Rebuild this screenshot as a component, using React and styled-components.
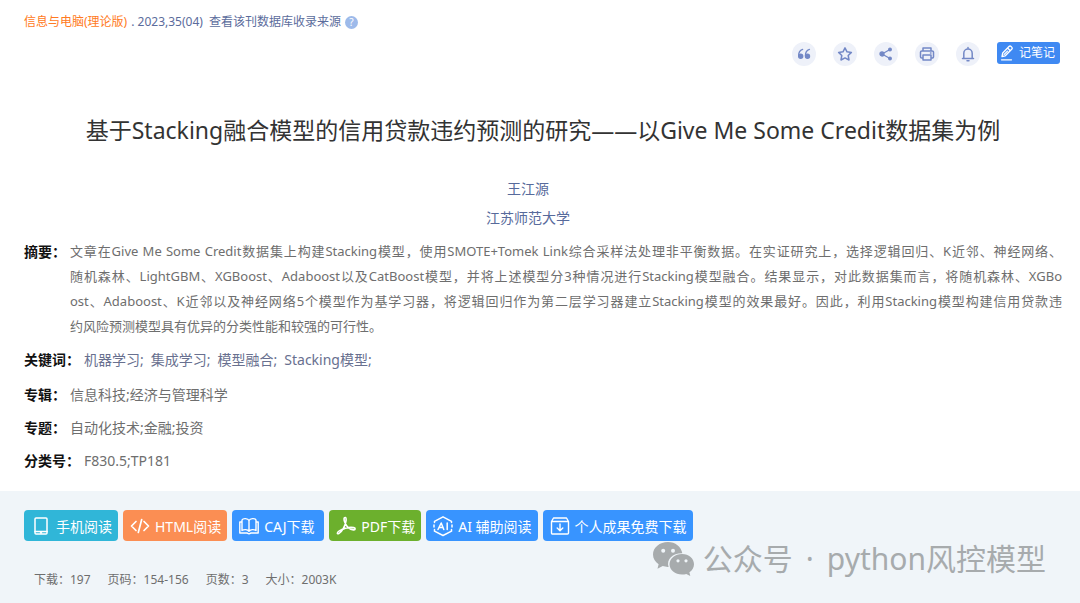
import React from "react";
import styled, { createGlobalStyle } from "styled-components";

const GlobalStyle = createGlobalStyle`
  * { box-sizing: border-box; }
  body {
    margin: 0;
    background: #fff;
    font-family: "Noto Sans", "Noto Sans CJK SC", sans-serif;
    font-size: 14px;
    color: #6e6e6e;
  }
  button { font-family: inherit; border: 0; cursor: pointer; }
  a { text-decoration: none; color: inherit; }
`;

const Page = styled.div`
  display: flex;
  flex-direction: column;
  min-height: 100vh;
`;

const Article = styled.main`
  padding: 13px 18px 10px 24px;
`;

const Source = styled.nav`
  display: flex;
  align-items: center;
  font-size: 12px;
  line-height: 18px;
  color: #5b6c9c;
`;

const Journal = styled.a`
  color: #ff7a22;
`;

const Issue = styled.a`
  margin: 0 6px 0 4px;
`;

const Help = styled.button`
  display: grid;
  place-items: center;
  width: 13px;
  height: 13px;
  margin-left: 4px;
  padding: 0;
  border-radius: 50%;
  background: #9dbaea;
  color: #fff;
  font-size: 10px;
  line-height: 13px;
`;

const Toolbar = styled.div`
  display: flex;
  justify-content: flex-end;
  align-items: center;
  gap: 17px;
  margin: 11px 2px 0 0;
`;

const RoundButton = styled.button`
  display: grid;
  place-items: center;
  width: 24px;
  height: 24px;
  padding: 0;
  border-radius: 50%;
  background: #eef1f9;
  color: #7388c6;
`;

const NoteButton = styled.button`
  display: flex;
  align-items: center;
  gap: 4px;
  height: 22px;
  margin-bottom: 2px;
  padding: 0 5px 0 2px;
  border-radius: 3px;
  background: #3f89f2;
  color: #fff;
  font-size: 12px;
  line-height: 20px;
`;

const Title = styled.h1`
  margin: 47px 0 0;
  font-size: 23px;
  line-height: 34px;
  font-weight: 400;
  text-align: center;
  color: #333;
`;

const Byline = styled.div`
  display: flex;
  flex-direction: column;
  align-items: center;
  gap: 5px;
  margin-top: 30px;
  padding-right: 30px;
  line-height: 24px;
  color: #576a9b;
`;

const Details = styled.dl`
  margin: 9px 0 0;
`;

const Row = styled.div`
  display: flex;
  align-items: flex-start;
  gap: 4px;
  margin-bottom: 8px;
  line-height: 25px;
`;

const Label = styled.dt`
  flex: none;
  font-weight: 700;
  color: #111;
`;

const Value = styled.dd`
  flex: 1;
  margin: 0;
`;

const Abstract = styled(Value)`
  font-size: 13px;
`;

const Line = styled.span`
  display: block;
  text-align: justify;
  text-align-last: ${(p) => (p.$last ? "left" : "justify")};
`;

const Keywords = styled(Value)`
  display: flex;
  gap: 7px;
  margin-bottom: 2px;
  color: #68708f;
`;

const Footer = styled.footer`
  flex: 1;
  padding: 19px 24px 12px;
  background: #f0f5f9;
`;

const Actions = styled.div`
  display: flex;
  flex-wrap: wrap;
  gap: 5px;
`;

const Action = styled.button`
  display: flex;
  align-items: center;
  gap: 4px;
  min-width: 92px;
  height: 31px;
  padding: 0 6px;
  border-radius: 4px;
  background: ${(p) => p.$color};
  color: #fff;
  font-size: 14px;
`;

const Bottom = styled.div`
  display: flex;
  justify-content: space-between;
  align-items: flex-start;
`;

const Stats = styled.ul`
  display: flex;
  gap: 17px;
  margin: 0;
  padding: 30px 10px 0;
  list-style: none;
  font-size: 12px;
  line-height: 18px;
`;

const Watermark = styled.div`
  display: flex;
  align-items: center;
  gap: 8px;
  margin-right: 10px;
  font-size: 30px;
  line-height: 36px;
  color: #a7abad;
`;

const Account = styled.span`
  display: flex;
  gap: 13px;
`;

const Svg = ({ size = 22, box = 22, width = 1.5, children }) => (
  <svg width={size} height={size} viewBox={`0 0 ${box} ${box}`} fill="none" stroke="currentColor"
    strokeWidth={width} strokeLinecap="round" strokeLinejoin="round" aria-hidden="true">
    {children}
  </svg>
);

const QuoteIcon = () => (
  <Svg size={16} box={16} width={1.4}>
    <path d="M6.600 3.400C4 4.300 2.600 6.600 2.700 9.700" />
    <path d="M13.400 3.400C10.800 4.300 9.400 6.600 9.500 9.700" />
    <circle cx="4.700" cy="10.300" r="2" fill="currentColor" />
    <circle cx="11.500" cy="10.300" r="2" fill="currentColor" />
  </Svg>
);
const StarIcon = () => (
  <Svg size={16} box={16} width={1.5}>
    <path d="M8 1.800l2 4 4.400.6-3.200 3.100.8 4.500L8 11.900 4 14l.8-4.500L1.600 6.400 6 5.800z" />
  </Svg>
);
const ShareIcon = () => (
  <Svg size={16} box={16} width={1.3}>
    <path d="M12 3.500L4 8l8 4.500" />
    <circle cx="4" cy="8" r="2" fill="currentColor" />
    <circle cx="12" cy="3.500" r="1.300" fill="currentColor" />
    <circle cx="12" cy="12.500" r="1.300" fill="currentColor" />
  </Svg>
);
const PrintIcon = () => (
  <Svg size={16} box={16} width={1.5}>
    <path d="M4 5V2h8v3M4 12H2.800A1.300 1.300 0 0 1 1.500 10.700V6.300A1.300 1.300 0 0 1 2.800 5h10.400a1.300 1.300 0 0 1 1.300 1.300v4.400a1.300 1.300 0 0 1-1.300 1.300H12M4 9h8v5H4zM11.500 7h.5" />
  </Svg>
);
const BellIcon = () => (
  <Svg size={16} box={16} width={1.5}>
    <path d="M2.500 12.500h11M3.800 12.300V7.200a4.200 4.200 0 0 1 8.400 0v5.100M8 1.500v1M7 14.800h2" />
  </Svg>
);
const PenIcon = () => (
  <Svg size={16} box={16} width={1.3}>
    <path d="M3 11.500l.7-3.500L10 1.500a1.500 1.500 0 0 1 2.100 0l.6.6a1.500 1.500 0 0 1 0 2.100L6.300 10.800zM8.600 3l2.700 2.700M5.200 9.400l3.300-3.300M2.500 14.800h10" />
  </Svg>
);
const PhoneIcon = () => (
  <Svg><rect x="5" y="3" width="12" height="16" rx="1" /><path d="M5 16.500h12M10.500 18h1" /></Svg>
);
const CodeIcon = () => (
  <Svg width={1.7}><path d="M7 6.500L2.500 11 7 15.500M15 6.500l4.500 4.500-4.500 4.500M12.700 4.500l-3.400 13" /></Svg>
);
const BookIcon = () => (
  <Svg width={1.4}>
    <path d="M11 5.500C10 3.300 5 3 4 5v10.500c2-1.400 5.500-1.200 7 .7 1.500-1.900 5-2.100 7-.7V5c-1-2-6-1.700-7 .5zM11 5.500v10.500M4 7H1.800v11H9l2 .8 2-.8h7.200V7H18" />
  </Svg>
);
const PdfIcon = () => (
  <Svg width={1.6}>
    <path d="M10.300 2.500c-1.600-.2-1.500 2.300-.6 4.500 1.500 4 5 7.500 8.800 7.900 2 .2 2.300-1.800.2-2.300-4.200-.8-9.700.7-14.400 3.300-2.800 1.600-2.200 3.500-.5 2.700 3-1.500 6.800-8.100 7.300-13.200.1-1.500.1-2.800-.8-2.900z" />
  </Svg>
);
const AiIcon = () => (
  <Svg width={1.5}>
    <path d="M2.500 7.500V6.400L11 1.800l8.500 4.600v1.100M2.500 14.500v1.700L11 20.500l8.500-4.300v-1.700" />
    <path d="M2 10v2M20 10v2M6 14.500L9.200 8l2.600 6.500M7.200 12.500h3.700M15.200 8v6.500" />
  </Svg>
);
const ArchiveIcon = () => (
  <Svg width={1.4}>
    <path d="M2.500 6.500h17V18a1 1 0 0 1-1 1h-15a1 1 0 0 1-1-1zM2.500 6.500l2-3.500h13l2 3.500M11 9v6.500M8.200 13l2.800 2.700 2.800-2.700" />
  </Svg>
);
const WechatIcon = () => (
  <svg width="42" height="34" viewBox="0 0 42 34" aria-hidden="true">
    <path fill="#a7abad" d="M15 0C6.700 0 0 5.500 0 12.500c0 4 2.200 7.400 5.600 9.700L4.500 26.800l5.200-2.700c1.900.6 3.700.9 5.900.8-2.500-8 4.500-14 13.700-13.700C28.200 4.800 22.300 0 15 0z" />
    <path fill="#a7abad" d="M29 12c-7 0-12.500 4.600-12.500 10.300S22 32.500 29 32.500c1.500 0 3-.2 4.300-.6l4 2-.9-3.600c2.900-1.900 4.600-4.800 4.600-8C41 16.600 36 12 29 12z" />
    <g fill="#f0f5f9"><circle cx="10.200" cy="8.800" r="2" /><circle cx="20" cy="8.800" r="2" /><circle cx="25" cy="18.800" r="1.600" /><circle cx="33" cy="18.800" r="1.600" /></g>
  </svg>
);

const tools = [
  ["引用", QuoteIcon], ["收藏", StarIcon], ["分享", ShareIcon], ["打印", PrintIcon], ["关注", BellIcon],
];
const actions = [
  ["手机阅读", "#30b6d8", PhoneIcon],
  ["HTML阅读", "#fb8e53", CodeIcon],
  ["CAJ下载", "#3894ff", BookIcon],
  ["PDF下载", "#6cb02d", PdfIcon],
  ["AI 辅助阅读", "#3894ff", AiIcon],
  ["个人成果免费下载", "#3894ff", ArchiveIcon],
];
const abstractLines = [
  "文章在Give Me Some Credit数据集上构建Stacking模型，使用SMOTE+Tomek Link综合采样法处理非平衡数据。在实证研究上，选择逻辑回归、K近邻、神经网络、",
  "随机森林、LightGBM、XGBoost、Adaboost以及CatBoost模型，并将上述模型分3种情况进行Stacking模型融合。结果显示，对此数据集而言，将随机森林、XGBo",
  "ost、Adaboost、K近邻以及神经网络5个模型作为基学习器，将逻辑回归作为第二层学习器建立Stacking模型的效果最好。因此，利用Stacking模型构建信用贷款违",
  "约风险预测模型具有优异的分类性能和较强的可行性。",
];
const keywords = ["机器学习;", "集成学习;", "模型融合;", "Stacking模型;"];
const facts = [
  ["专辑：", "信息科技;经济与管理科学"],
  ["专题：", "自动化技术;金融;投资"],
  ["分类号：", "F830.5;TP181"],
];
const stats = ["下载：197", "页码：154-156", "页数：3", "大小：2003K"];

export default function App() {
  return (
    <Page lang="zh-CN">
      <GlobalStyle />
      <Article>
        <Source>
          <Journal href="#journal">信息与电脑(理论版)</Journal>
          <Issue href="#issue">. 2023,35(04)</Issue>
          <a href="#database">查看该刊数据库收录来源</a>
          <Help type="button">?</Help>
        </Source>
        <Toolbar>
          {tools.map(([name, Icon]) => (
            <RoundButton key={name} type="button" aria-label={name}><Icon /></RoundButton>
          ))}
          <NoteButton type="button"><PenIcon />记笔记</NoteButton>
        </Toolbar>
        <Title>基于Stacking融合模型的信用贷款违约预测的研究——以Give Me Some Credit数据集为例</Title>
        <Byline>
          <a href="#author">王江源</a>
          <a href="#school">江苏师范大学</a>
        </Byline>
        <Details>
          <Row>
            <Label>摘要：</Label>
            <Abstract>
              {abstractLines.map((text, i) => (
                <Line key={text} $last={i === abstractLines.length - 1}>{text}</Line>
              ))}
            </Abstract>
          </Row>
          <Row>
            <Label>关键词：</Label>
            <Keywords>
              {keywords.map((word) => <a key={word} href="#keyword">{word}</a>)}
            </Keywords>
          </Row>
          {facts.map(([name, value]) => (
            <Row key={name}>
              <Label>{name}</Label>
              <Value>{value}</Value>
            </Row>
          ))}
        </Details>
      </Article>
      <Footer>
        <Actions>
          {actions.map(([name, color, Icon]) => (
            <Action key={name} type="button" $color={color}><Icon />{name}</Action>
          ))}
        </Actions>
        <Bottom>
          <Stats>{stats.map((text) => <li key={text}>{text}</li>)}</Stats>
          <Watermark>
            <WechatIcon />
            <Account><span>公众号</span><span>·</span><span>python风控模型</span></Account>
          </Watermark>
        </Bottom>
      </Footer>
    </Page>
  );
}
